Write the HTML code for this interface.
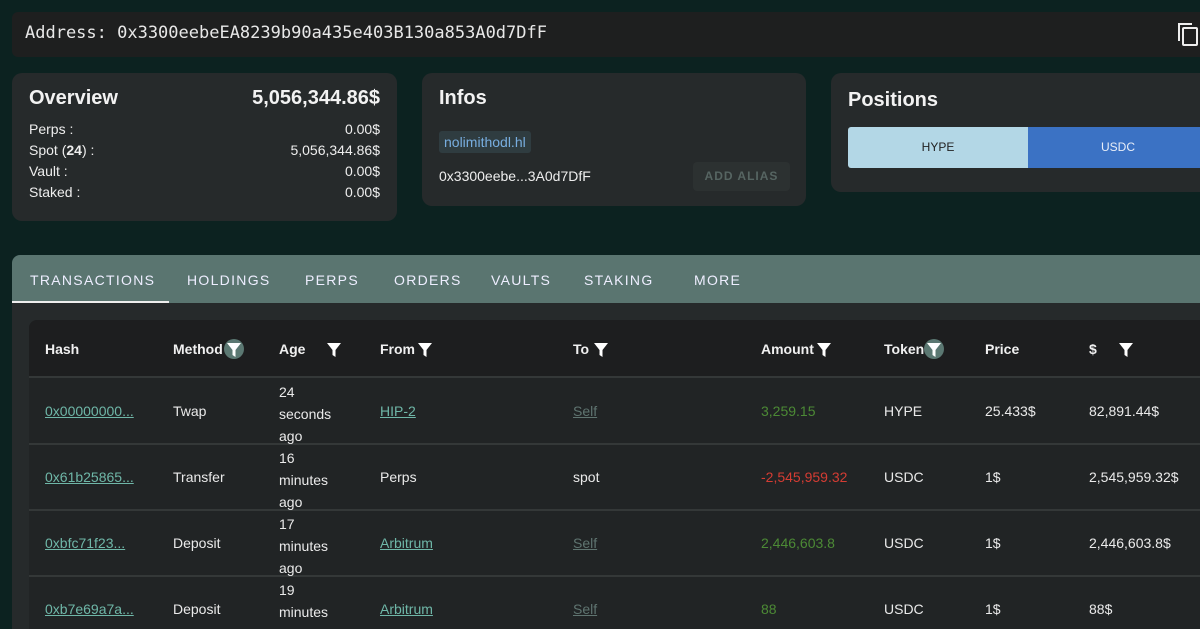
<!DOCTYPE html>
<html><head><meta charset="utf-8"><style>
*{box-sizing:border-box;margin:0;padding:0}
html,body{width:1200px;height:629px;overflow:hidden}
body{background:#0c2220;font-family:"Liberation Sans",sans-serif;color:#eee;position:relative}
.abs{position:absolute}
.addr{left:12px;top:12px;width:1200px;height:45px;background:#1e1f1f;border-radius:6px;font-family:"DejaVu Sans Mono","Liberation Mono",monospace;font-size:17px;padding:11px 0 0 13px;color:#e8e8e8}
.card{background:#262a2b;border-radius:10px}
.h{font-size:20px;font-weight:bold;color:#f2f2f2}
.row{font-size:14px;display:flex;justify-content:space-between;line-height:21px}
.tabs{left:12px;top:255px;width:1200px;height:48px;background:#5a7570;border-radius:8px 8px 0 0}
.tab{position:absolute;top:17px;font-size:14px;letter-spacing:1.3px;color:#eef}
.panel{left:12px;top:303px;width:1200px;height:330px;background:#262a2b}
.table{left:29px;top:320px;width:1180px;height:320px;background:#212425;border-radius:8px;overflow:hidden}
.thead{position:absolute;left:0;top:0;width:100%;height:58px;background:#1d1e1f;border-bottom:2px solid #343838}
.th{position:absolute;top:21px;font-size:14px;font-weight:bold;color:#f0f0f0}
.td{position:absolute;font-size:14px;color:#eaeaea}
.sep{position:absolute;left:0;width:100%;height:2px;background:#343838}
.lk{color:#6fb7a8;text-decoration:underline}
.self{color:#5f7470;text-decoration:underline}
.g{color:#4c8a35}.r{color:#d43c33}
.f{display:inline-block;width:20px;height:20px;vertical-align:middle;position:absolute;top:-2px}
.fc{border-radius:50%;background:#5b7872}
</style></head><body>
<div class="abs addr">Address: 0x3300eebeEA8239b90a435e403B130a853A0d7DfF</div>
<svg class="abs" style="left:1176px;top:21px" width="24" height="26" viewBox="0 0 24 26"><path d="M3 20V3h13" fill="none" stroke="#eee" stroke-width="2"/><rect x="7" y="7" width="14" height="17" rx="1" fill="none" stroke="#eee" stroke-width="2"/></svg>

<div class="abs card" style="left:12px;top:73px;width:385px;height:148px;padding:14px 17px">
<div style="display:flex;justify-content:space-between;margin-bottom:9px"><span class="h">Overview</span><span class="h">5,056,344.86$</span></div>
<div class="row"><span>Perps :</span><span>0.00$</span></div>
<div class="row"><span>Spot (<b>24</b>) :</span><span>5,056,344.86$</span></div>
<div class="row"><span>Vault :</span><span>0.00$</span></div>
<div class="row"><span>Staked :</span><span>0.00$</span></div>
</div>

<div class="abs card" style="left:422px;top:73px;width:384px;height:133px">
<div class="h abs" style="left:17px;top:14px">Infos</div>
<div class="abs" style="left:17px;top:58px;background:#2f3c40;color:#78aee0;font-size:14px;padding:3px 5px;border-radius:3px">nolimithodl.hl</div>
<div class="abs" style="left:17px;top:95px;font-size:14px">0x3300eebe...3A0d7DfF</div>
<div class="abs" style="left:271px;top:89px;width:97px;height:29px;background:#2c3131;border-radius:4px;color:#566562;font-size:12px;font-weight:bold;letter-spacing:1px;text-align:center;line-height:29px">ADD ALIAS</div>
</div>

<div class="abs card" style="left:831px;top:73px;width:380px;height:119px">
<div class="h abs" style="left:17px;top:16px">Positions</div>
<div class="abs" style="left:17px;top:54px;width:180px;height:41px;background:#b3d7e6;color:#222;font-size:12px;text-align:center;line-height:41px;border-radius:3px 0 0 3px">HYPE</div>
<div class="abs" style="left:197px;top:54px;width:180px;height:41px;background:#3b72c4;color:#e8eef8;font-size:12px;text-align:center;line-height:41px">USDC</div>
</div>

<div class="abs tabs">
<span class="tab" style="left:18px">TRANSACTIONS</span>
<span class="tab" style="left:175px">HOLDINGS</span>
<span class="tab" style="left:293px">PERPS</span>
<span class="tab" style="left:382px">ORDERS</span>
<span class="tab" style="left:479px">VAULTS</span>
<span class="tab" style="left:572px">STAKING</span>
<span class="tab" style="left:682px">MORE</span>
<div class="abs" style="left:0;top:46px;width:157px;height:2px;background:#eee"></div>
</div>
<div class="abs panel"></div>
<div class="abs table">
<div class="thead">
<svg width="0" height="0" style="position:absolute"><defs><path id="fn" d="M3 4h14l-5.5 7v7l-3-2v-5z" fill="#fff"/></defs></svg>
<span class="th" style="left:16px">Hash</span>
<span class="th" style="left:144px">Method<svg class="f fc" style="left:51px" viewBox="0 0 20 20"><use href="#fn"/></svg></span>
<span class="th" style="left:250px">Age<svg class="f" style="left:45px" viewBox="0 0 20 20"><use href="#fn"/></svg></span>
<span class="th" style="left:351px">From<svg class="f" style="left:35px" viewBox="0 0 20 20"><use href="#fn"/></svg></span>
<span class="th" style="left:544px">To<svg class="f" style="left:18px" viewBox="0 0 20 20"><use href="#fn"/></svg></span>
<span class="th" style="left:732px">Amount<svg class="f" style="left:53px" viewBox="0 0 20 20"><use href="#fn"/></svg></span>
<span class="th" style="left:855px">Token<svg class="f fc" style="left:40px" viewBox="0 0 20 20"><use href="#fn"/></svg></span>
<span class="th" style="left:956px">Price</span>
<span class="th" style="left:1060px">$<svg class="f" style="left:27px" viewBox="0 0 20 20"><use href="#fn"/></svg></span>
</div>
<div class="sep" style="top:123px"></div>
<div class="sep" style="top:189px"></div>
<div class="sep" style="top:255px"></div>

<div class="td lk" style="left:16px;top:83px">0x00000000...</div>
<div class="td" style="left:144px;top:83px">Twap</div>
<div class="td" style="left:250px;top:61px;line-height:22px">24<br>seconds<br>ago</div>
<div class="td lk" style="left:351px;top:83px">HIP-2</div>
<div class="td self" style="left:544px;top:83px">Self</div>
<div class="td g" style="left:732px;top:83px">3,259.15</div>
<div class="td" style="left:855px;top:83px">HYPE</div>
<div class="td" style="left:956px;top:83px">25.433$</div>
<div class="td" style="left:1060px;top:83px">82,891.44$</div>

<div class="td lk" style="left:16px;top:149px">0x61b25865...</div>
<div class="td" style="left:144px;top:149px">Transfer</div>
<div class="td" style="left:250px;top:127px;line-height:22px">16<br>minutes<br>ago</div>
<div class="td" style="left:351px;top:149px">Perps</div>
<div class="td" style="left:544px;top:149px">spot</div>
<div class="td r" style="left:732px;top:149px">-2,545,959.32</div>
<div class="td" style="left:855px;top:149px">USDC</div>
<div class="td" style="left:956px;top:149px">1$</div>
<div class="td" style="left:1060px;top:149px">2,545,959.32$</div>

<div class="td lk" style="left:16px;top:215px">0xbfc71f23...</div>
<div class="td" style="left:144px;top:215px">Deposit</div>
<div class="td" style="left:250px;top:193px;line-height:22px">17<br>minutes<br>ago</div>
<div class="td lk" style="left:351px;top:215px">Arbitrum</div>
<div class="td self" style="left:544px;top:215px">Self</div>
<div class="td g" style="left:732px;top:215px">2,446,603.8</div>
<div class="td" style="left:855px;top:215px">USDC</div>
<div class="td" style="left:956px;top:215px">1$</div>
<div class="td" style="left:1060px;top:215px">2,446,603.8$</div>

<div class="td lk" style="left:16px;top:281px">0xb7e69a7a...</div>
<div class="td" style="left:144px;top:281px">Deposit</div>
<div class="td" style="left:250px;top:259px;line-height:22px">19<br>minutes<br>ago</div>
<div class="td lk" style="left:351px;top:281px">Arbitrum</div>
<div class="td self" style="left:544px;top:281px">Self</div>
<div class="td g" style="left:732px;top:281px">88</div>
<div class="td" style="left:855px;top:281px">USDC</div>
<div class="td" style="left:956px;top:281px">1$</div>
<div class="td" style="left:1060px;top:281px">88$</div>
</div>
</body></html>
